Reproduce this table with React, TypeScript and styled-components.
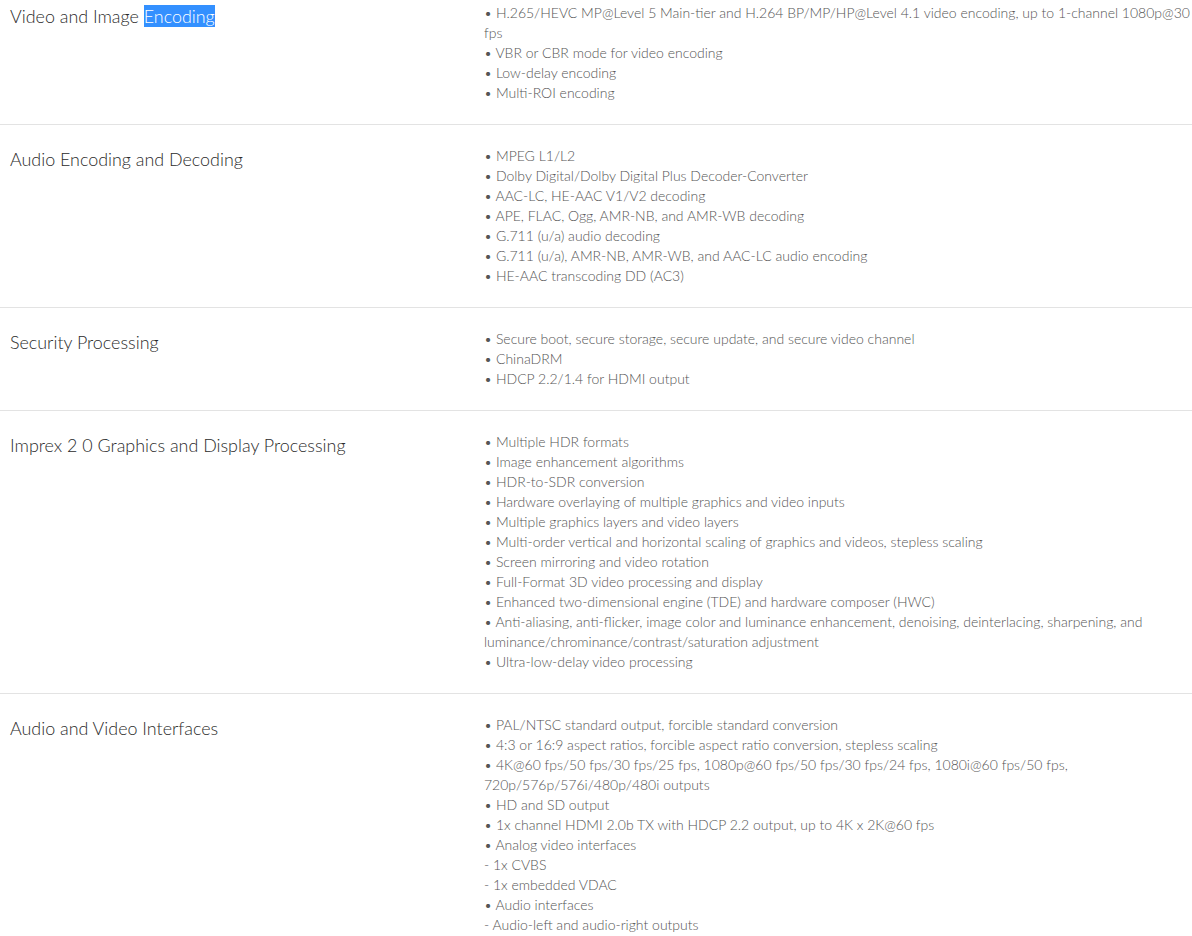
import React from 'react';
import styled, { createGlobalStyle } from 'styled-components';

const GlobalStyle = createGlobalStyle`
  body {
    margin: 0;
    background: #fff;
    font-family: Lato, "Open Sans", sans-serif;
  }
`;

const SpecTable = styled.div`
  margin-top: -18px;
`;

const SpecRow = styled.div`
  display: grid;
  grid-template-columns: 484px 1fr;
  padding: 21px 0;
  border-bottom: 1px solid #e3e3e3;
`;

const SpecTitle = styled.h3`
  margin: 0;
  padding-left: 10px;
  font-size: 17.9px;
  font-weight: 300;
  line-height: 26px;
  color: #2b2b2b;
`;

const Selected = styled.span`
  background: #3390ff;
  color: #fff;
`;

const SpecList = styled.div`
  font-size: 14px;
  font-weight: 300;
  line-height: 20px;
  color: #555;
  white-space: nowrap;
`;

const SpecLine = styled.div``;

type Spec = { title: React.ReactNode; lines: React.ReactNode[] };

const specs: Spec[] = [
  {
    title: (
      <>
        Video and Image <Selected>Encoding</Selected>
      </>
    ),
    lines: [
      <>
        • H.265/HEVC MP@Level 5 Main-tier and H.264 BP/MP/HP@Level 4.1 video encoding, up to 1-channel 1080p@30
        <br />
        fps
      </>,
      '• VBR or CBR mode for video encoding',
      '• Low-delay encoding',
      '• Multi-ROI encoding',
    ],
  },
  {
    title: 'Audio Encoding and Decoding',
    lines: [
      '• MPEG L1/L2',
      '• Dolby Digital/Dolby Digital Plus Decoder-Converter',
      '• AAC-LC, HE-AAC V1/V2 decoding',
      '• APE, FLAC, Ogg, AMR-NB, and AMR-WB decoding',
      '• G.711 (u/a) audio decoding',
      '• G.711 (u/a), AMR-NB, AMR-WB, and AAC-LC audio encoding',
      '• HE-AAC transcoding DD (AC3)',
    ],
  },
  {
    title: 'Security Processing',
    lines: [
      '• Secure boot, secure storage, secure update, and secure video channel',
      '• ChinaDRM',
      '• HDCP 2.2/1.4 for HDMI output',
    ],
  },
  {
    title: 'Imprex 2 0 Graphics and Display Processing',
    lines: [
      '• Multiple HDR formats',
      '• Image enhancement algorithms',
      '• HDR-to-SDR conversion',
      '• Hardware overlaying of multiple graphics and video inputs',
      '• Multiple graphics layers and video layers',
      '• Multi-order vertical and horizontal scaling of graphics and videos, stepless scaling',
      '• Screen mirroring and video rotation',
      '• Full-Format 3D video processing and display',
      '• Enhanced two-dimensional engine (TDE) and hardware composer (HWC)',
      <>
        • Anti-aliasing, anti-flicker, image color and luminance enhancement, denoising, deinterlacing, sharpening, and
        <br />
        luminance/chrominance/contrast/saturation adjustment
      </>,
      '• Ultra-low-delay video processing',
    ],
  },
  {
    title: 'Audio and Video Interfaces',
    lines: [
      '• PAL/NTSC standard output, forcible standard conversion',
      '• 4:3 or 16:9 aspect ratios, forcible aspect ratio conversion, stepless scaling',
      <>
        • 4K@60 fps/50 fps/30 fps/25 fps, 1080p@60 fps/50 fps/30 fps/24 fps, 1080i@60 fps/50 fps,
        <br />
        720p/576p/576i/480p/480i outputs
      </>,
      '• HD and SD output',
      '• 1x channel HDMI 2.0b TX with HDCP 2.2 output, up to 4K x 2K@60 fps',
      '• Analog video interfaces',
      '- 1x CVBS',
      '- 1x embedded VDAC',
      '• Audio interfaces',
      '- Audio-left and audio-right outputs',
    ],
  },
];

export default function App() {
  return (
    <>
      <GlobalStyle />
      <SpecTable>
        {specs.map((spec, i) => (
          <SpecRow key={i}>
            <SpecTitle>{spec.title}</SpecTitle>
            <SpecList>
              {spec.lines.map((line, j) => (
                <SpecLine key={j}>{line}</SpecLine>
              ))}
            </SpecList>
          </SpecRow>
        ))}
      </SpecTable>
    </>
  );
}
